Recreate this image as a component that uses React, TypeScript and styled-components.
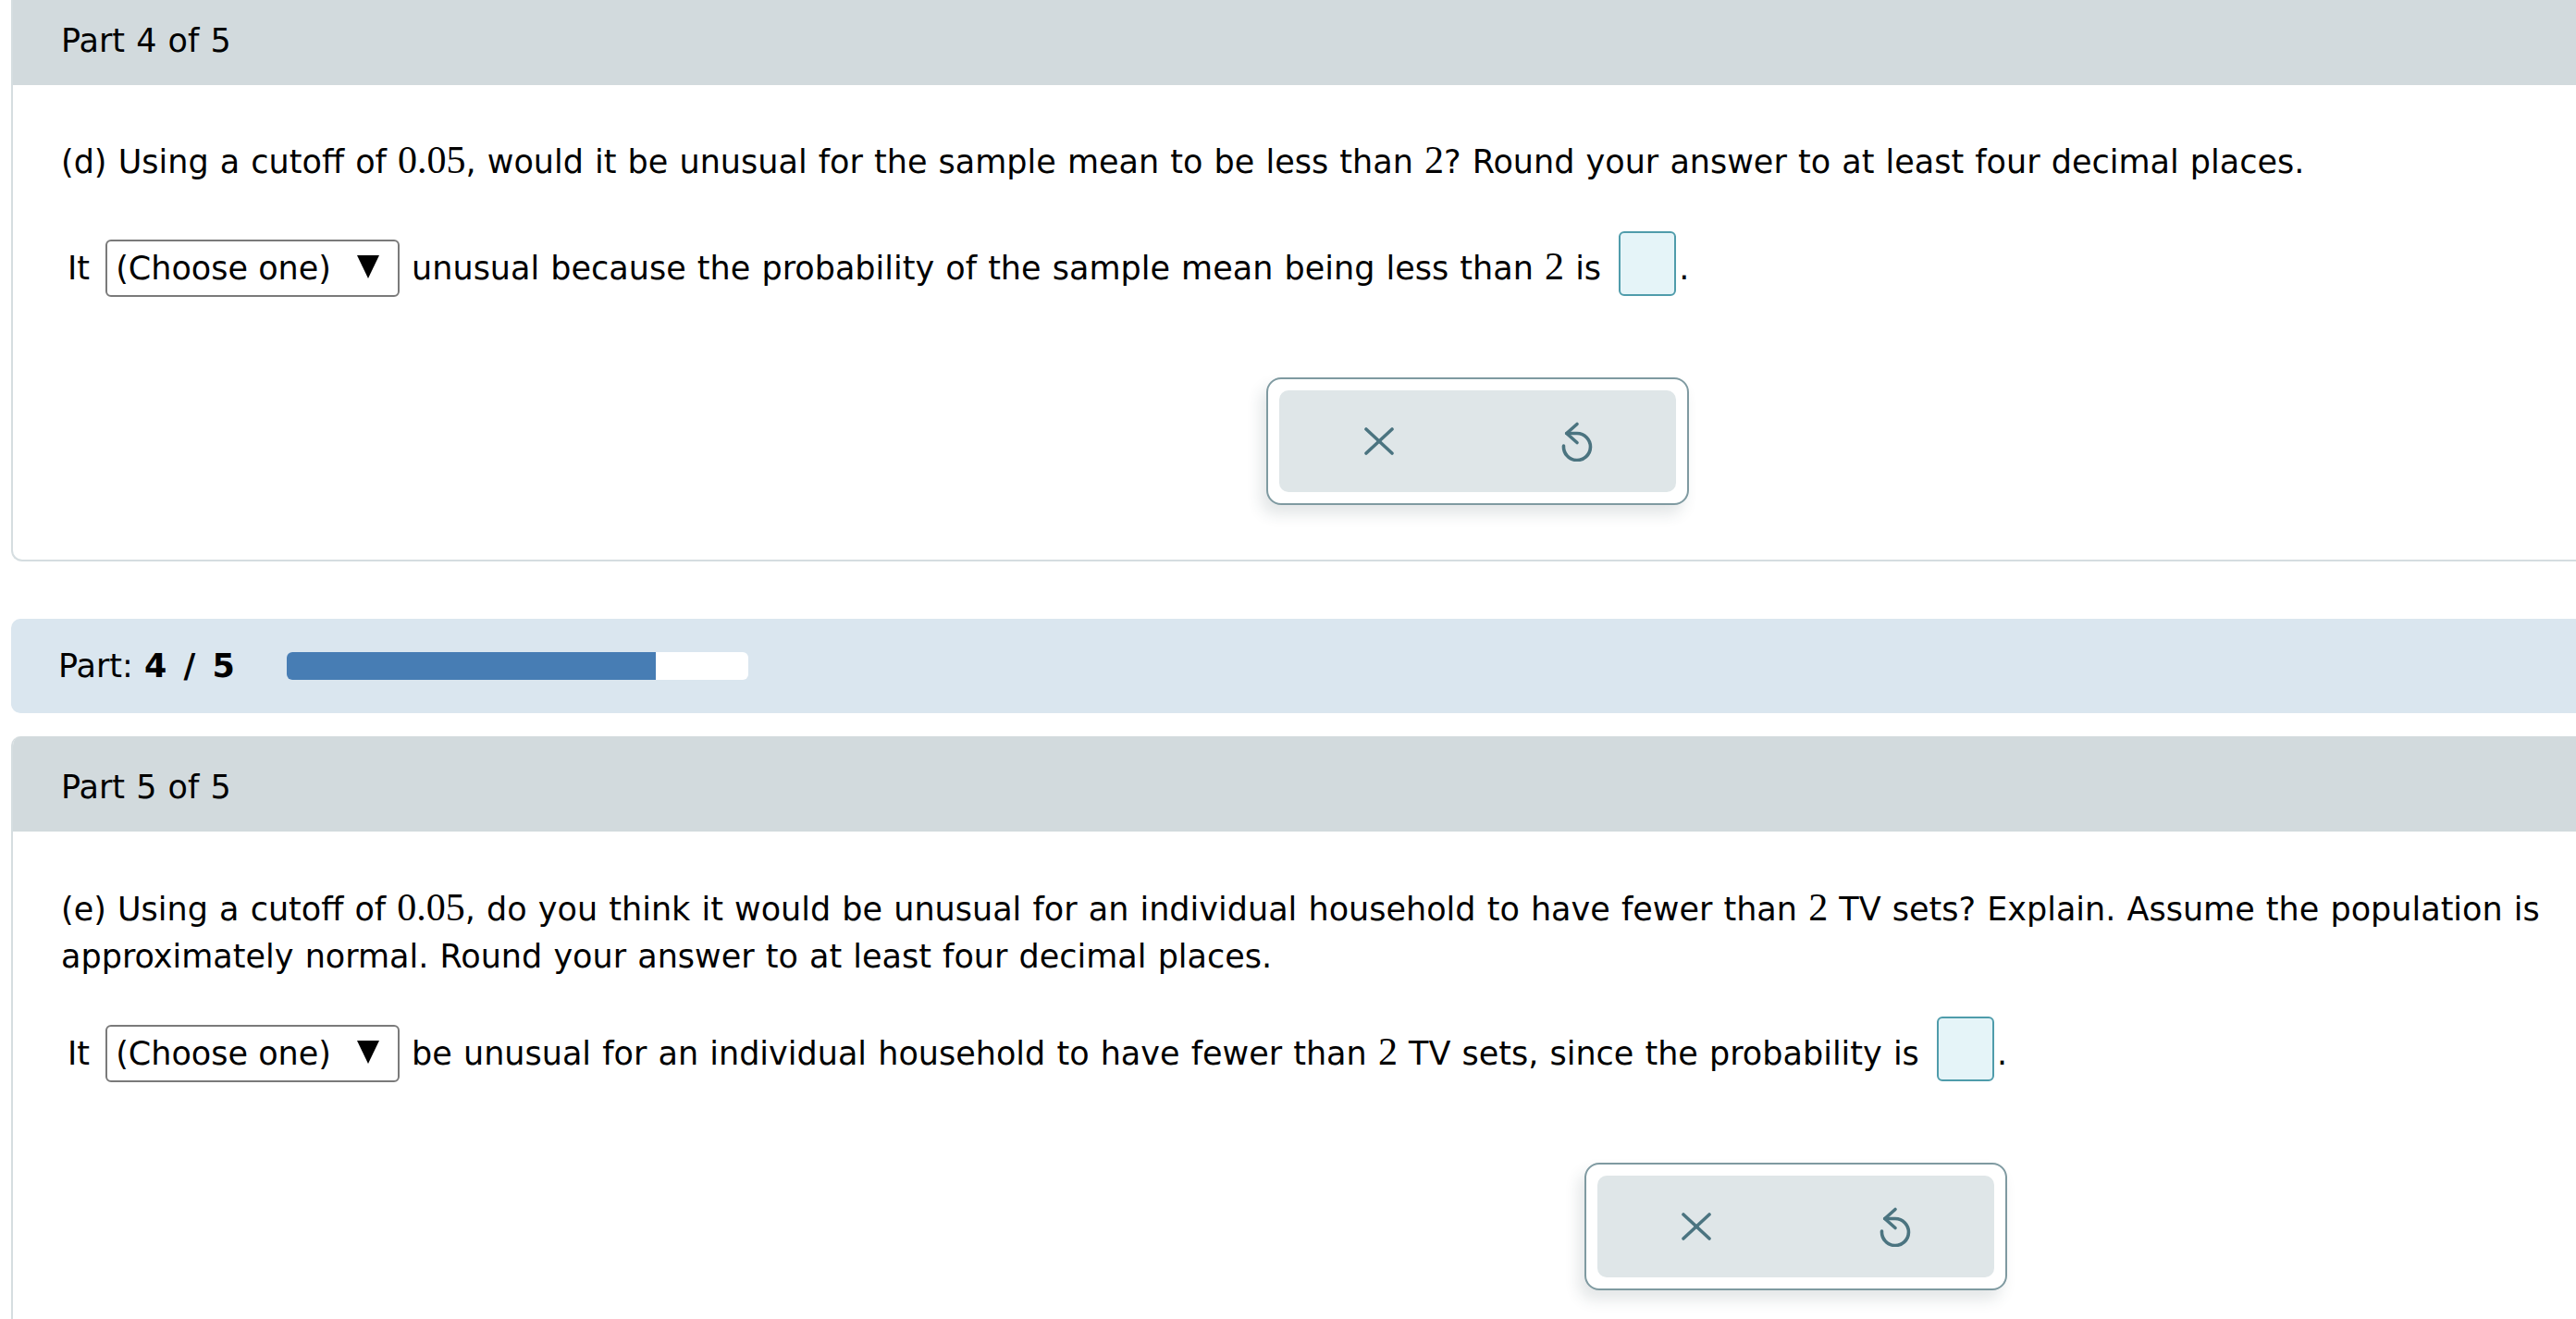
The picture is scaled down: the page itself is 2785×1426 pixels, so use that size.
import React from "react";
import styled, { createGlobalStyle } from "styled-components";

const GlobalStyle = createGlobalStyle`
  html, body {
    margin: 0;
    padding: 0;
    background: #ffffff;
    overflow: hidden;
  }
  body {
    font-family: "DejaVu Sans", Verdana, "Noto Sans", sans-serif;
    font-size: 35px;
    word-spacing: 1px;
    color: #000000;
  }
`;

const Page = styled.div`
  margin-top: -11px;
  padding-left: 12px;
`;

const Card = styled.section<{ $top?: number }>`
  margin-top: ${(p) => p.$top ?? 0}px;
  margin-right: -40px;
  border-left: 2px solid #d5dde0;
  border-bottom: 2px solid #d5dde0;
  border-radius: 10px 0 0 12px;
  overflow: hidden;
`;

const CardHeader = styled.div`
  background: #d2dadd;
  padding: 30px 52px 22px 52px;
  line-height: 51px;
`;

const CardBody = styled.div<{ $padTop: number }>`
  padding: ${(p) => p.$padTop}px 20px 59px 52px;
`;

const Question = styled.p`
  margin: 0;
  line-height: 51px;
`;

const MathNum = styled.span`
  font-family: "Liberation Serif", "Times New Roman", serif;
  font-size: 42px;
  line-height: 1;
  word-spacing: 0;
`;

const AnswerBlock = styled.div<{ $top: number }>`
  display: inline-flex;
  flex-direction: column;
  align-items: flex-end;
  margin-top: ${(p) => p.$top}px;
  margin-left: 7px;
`;

const Sentence = styled.div`
  line-height: 51px;
  white-space: nowrap;
`;

const SelectBox = styled.span`
  display: inline-block;
  border: 2px solid #7a7a7a;
  border-radius: 6px;
  padding: 9px 20px 9px 9px;
  line-height: 40px;
  margin: 0 1px 0 5px;
  background: #ffffff;
  word-spacing: 0;
`;

const Caret = styled.svg`
  margin-left: 28px;
  vertical-align: 1px;
`;

const AnswerInput = styled.span`
  display: inline-block;
  box-sizing: border-box;
  width: 62px;
  height: 70px;
  border: 2px solid #4f9cab;
  border-radius: 6px;
  background: #e5f4f8;
  vertical-align: -18px;
  margin: 0 3px 0 7px;
`;

const ToolPanel = styled.div`
  box-sizing: border-box;
  width: 457px;
  height: 138px;
  margin-top: 87px;
  padding: 12px;
  border: 2px solid #7f9aa1;
  border-radius: 16px;
  background: #ffffff;
  box-shadow: -6px 10px 16px rgba(40, 60, 70, 0.13);
`;

const ToolInner = styled.div`
  display: flex;
  height: 100%;
  background: #dfe6e8;
  border-radius: 10px;
`;

const ToolButton = styled.button`
  flex: 1;
  display: flex;
  align-items: center;
  justify-content: center;
  background: transparent;
  border: none;
  padding: 0;
  cursor: pointer;
`;

const ProgressBand = styled.div`
  margin-top: 62px;
  height: 102px;
  background: #dae6ef;
  border-radius: 10px 0 0 10px;
  display: flex;
  align-items: center;
  padding-left: 51px;
  gap: 56px;
`;

const ProgressLabel = styled.span`
  line-height: 51px;
  white-space: nowrap;
`;

const Strong = styled.b`
  font-weight: bold;
  word-spacing: 6px;
`;

const Track = styled.div`
  width: 499px;
  height: 30px;
  background: #ffffff;
  border-radius: 6px;
  overflow: hidden;
`;

const Fill = styled.div`
  height: 100%;
  background: #477db4;
`;

const ChooseOne = () => (
  <SelectBox role="combobox">
    (Choose one)
    <Caret width="24" height="25" viewBox="0 0 24 25">
      <polygon points="0,0 24,0 12,25" fill="#000" />
    </Caret>
  </SelectBox>
);

const XIcon = () => (
  <svg width="32" height="30" viewBox="0 0 32 30">
    <g stroke="#4b7480" strokeWidth="3.6" strokeLinecap="round">
      <line x1="2" y1="2" x2="30" y2="28" />
      <line x1="30" y1="2" x2="2" y2="28" />
    </g>
  </svg>
);

const UndoIcon = () => (
  <svg width="40" height="44" viewBox="0 0 40 44">
    <g
      stroke="#4b7480"
      strokeWidth="3.6"
      strokeLinecap="round"
      strokeLinejoin="round"
      fill="none"
    >
      <path d="M8.7 13.5 L20 13.5 A14.5 14.5 0 1 1 5.5 27" />
      <path d="M20 3.5 L8.7 13.5 L20 23.5" />
    </g>
  </svg>
);

const Tools = () => (
  <ToolPanel>
    <ToolInner>
      <ToolButton aria-label="Clear">
        <XIcon />
      </ToolButton>
      <ToolButton aria-label="Undo">
        <UndoIcon />
      </ToolButton>
    </ToolInner>
  </ToolPanel>
);

export default function App() {
  return (
    <>
      <GlobalStyle />
      <Page>
        <Card>
          <CardHeader>Part 4 of 5</CardHeader>
          <CardBody $padTop={58}>
            <Question>
              (d) Using a cutoff of <MathNum>0.05</MathNum>, would it be unusual
              for the sample mean to be less than <MathNum>2</MathNum>? Round
              your answer to at least four decimal places.
            </Question>
            <AnswerBlock $top={49}>
              <Sentence>
                It <ChooseOne /> unusual because the probability of the sample
                mean being less than <MathNum>2</MathNum> is <AnswerInput />.
              </Sentence>
              <Tools />
            </AnswerBlock>
          </CardBody>
        </Card>

        <ProgressBand>
          <ProgressLabel>
            Part: <Strong>4 / 5</Strong>
          </ProgressLabel>
          <Track>
            <Fill style={{ width: `${(4 / 5) * 100}%` }} />
          </Track>
        </ProgressBand>

        <Card $top={25}>
          <CardHeader>Part 5 of 5</CardHeader>
          <CardBody $padTop={59}>
            <Question>
              (e) Using a cutoff of <MathNum>0.05</MathNum>, do you think it
              would be unusual for an individual household to have fewer than{" "}
              <MathNum>2</MathNum> TV sets? Explain. Assume the population is
              approximately normal. Round your answer to at least four decimal
              places.
            </Question>
            <AnswerBlock $top={39}>
              <Sentence>
                It <ChooseOne /> be unusual for an individual household to have
                fewer than <MathNum>2</MathNum> TV sets, since the probability
                is <AnswerInput />.
              </Sentence>
              <Tools />
            </AnswerBlock>
          </CardBody>
        </Card>
      </Page>
    </>
  );
}
